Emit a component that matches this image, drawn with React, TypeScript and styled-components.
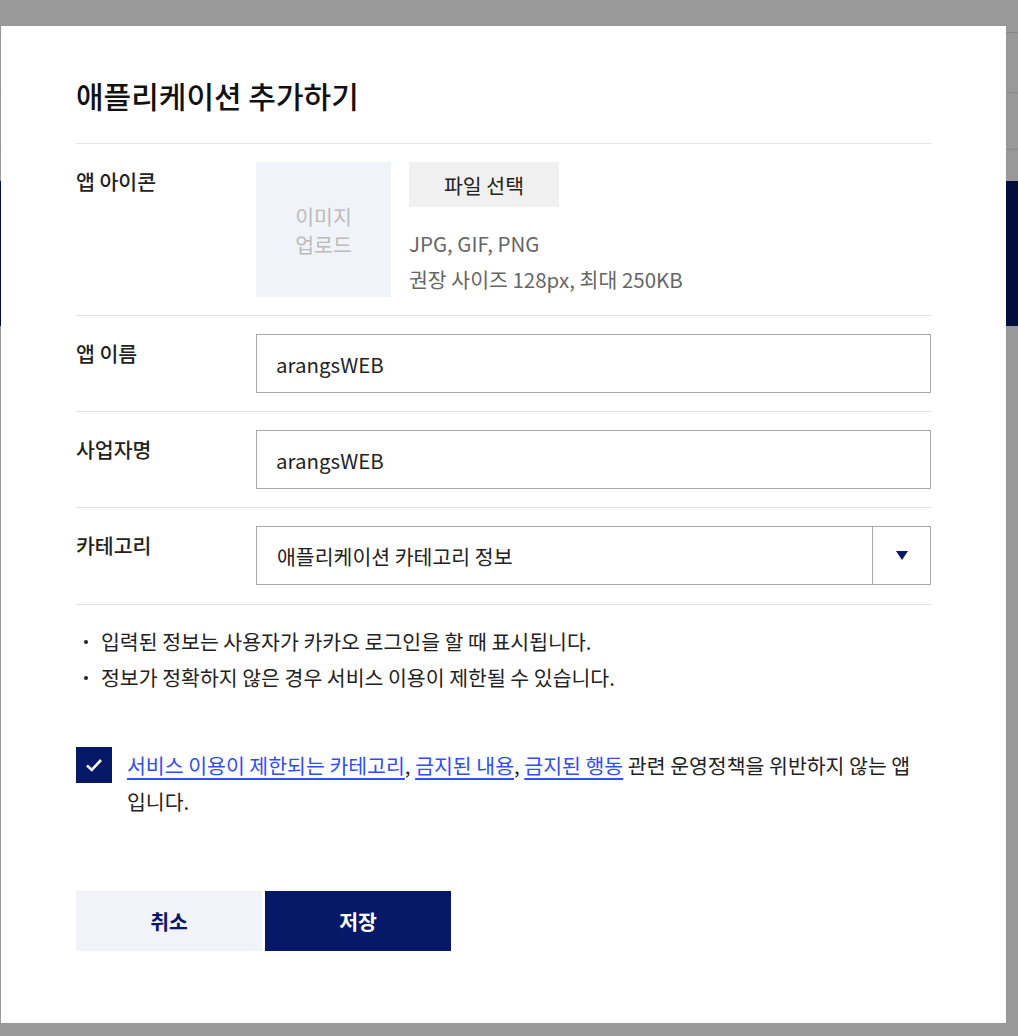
import React from "react";
import styled, { createGlobalStyle } from "styled-components";

const GlobalStyle = createGlobalStyle`
  html, body {
    margin: 0;
    padding: 0;
  }
  body {
    font-family: "Noto Sans CJK KR", "Noto Sans", sans-serif;
    color: #222;
  }
  * { box-sizing: border-box; }
`;

const FONT = `"Noto Sans CJK KR", "Noto Sans", sans-serif`;
const NAVY = "#061868";
const TEXT_SIZE = "20.5px";

/* ---------- underlying page (dimmed) ---------- */
const Page = styled.div`
  width: 1018px;
  height: 1036px;
  background: #fff;
  display: flex;
  flex-direction: column;
`;

const PageBar = styled.div<{ $h: number }>`
  height: ${(p) => p.$h}px;
  border-bottom: 1px solid #e2e2e2;
`;

const PageBanner = styled.div`
  margin-top: 31px;
  height: 145px;
  background: ${NAVY};
`;

/* ---------- overlay & modal ---------- */
const Overlay = styled.div`
  position: fixed;
  inset: 0;
  background: rgba(0, 0, 0, 0.4);
`;

const Modal = styled.div`
  position: absolute;
  left: 1px;
  top: 26px;
  width: 1005px;
  height: 997px;
  background: #fff;
  padding: 48px 75px 0 75px;
  font-family: ${FONT};
`;

const Title = styled.h1`
  margin: 0 0 27px;
  font-size: 30px;
  line-height: 42px;
  font-weight: 500;
  color: #111;
`;

const Form = styled.div`
  border-top: 1px solid #e5e5e5;
`;

const Row = styled.div`
  display: flex;
  padding: 18px 0;
  border-bottom: 1px solid #e5e5e5;
  &:last-child {
    padding-bottom: 19px;
  }
`;

const Label = styled.div`
  width: 180px;
  flex-shrink: 0;
  font-size: ${TEXT_SIZE};
  line-height: 38px;
  font-weight: 500;
  color: #222;
`;

const Field = styled.div`
  flex: 1;
  display: flex;
`;

const ImageBox = styled.div`
  width: 135px;
  height: 135px;
  background: #f2f3f8;
  color: #bbb;
  font-size: ${TEXT_SIZE};
  line-height: 28px;
  display: flex;
  align-items: center;
  justify-content: center;
  text-align: center;
`;

const UploadSide = styled.div`
  margin-left: 18px;
  display: flex;
  flex-direction: column;
  align-items: flex-start;
`;

const FileButton = styled.button`
  width: 150px;
  height: 45px;
  border: 0;
  background: #f0f0f0;
  font-family: ${FONT};
  font-size: ${TEXT_SIZE};
  color: #222;
  padding: 0;
  cursor: pointer;
`;

const Help = styled.div`
  margin-top: 18px;
  font-size: ${TEXT_SIZE};
  line-height: 36px;
  color: #666;
`;

const TextInput = styled.input`
  width: 100%;
  height: 59px;
  border: 1px solid #aaa;
  padding: 0 19px;
  font-family: ${FONT};
  font-size: ${TEXT_SIZE};
  color: #222;
  outline: none;
  background: #fff;
`;

const Select = styled.div`
  width: 100%;
  height: 59px;
  border: 1px solid #aaa;
  display: flex;
  align-items: stretch;
`;

const SelectValue = styled.div`
  flex: 1;
  padding: 0 20px;
  display: flex;
  align-items: center;
  font-size: ${TEXT_SIZE};
  color: #222;
`;

const SelectArrow = styled.div`
  width: 58px;
  border-left: 1px solid #aaa;
  display: flex;
  align-items: center;
  justify-content: center;
`;

const Notes = styled.ul`
  list-style: none;
  margin: 0;
  padding: 18px 0 0;
`;

const Note = styled.li`
  position: relative;
  padding-left: 25px;
  font-size: ${TEXT_SIZE};
  line-height: 36px;
  color: #222;
  &::before {
    content: "";
    position: absolute;
    left: 8px;
    top: 17px;
    width: 4px;
    height: 4px;
    border-radius: 50%;
    background: #222;
  }
`;

const Agree = styled.label`
  margin-top: 52px;
  display: flex;
  align-items: flex-start;
  gap: 15px;
`;

const CheckBox = styled.span`
  width: 36px;
  height: 36px;
  flex-shrink: 0;
  background: ${NAVY};
  display: flex;
  align-items: center;
  justify-content: center;
`;

const AgreeText = styled.div`
  font-size: ${TEXT_SIZE};
  line-height: 36px;
  color: #222;
`;

const PolicyLink = styled.a`
  color: #2f4ff0;
  text-decoration: underline;
  text-underline-offset: 4px;
`;

const Actions = styled.div`
  margin-top: 72px;
  display: flex;
  gap: 3px;
`;

const ActionButton = styled.button<{ $primary?: boolean }>`
  width: 186px;
  height: 60px;
  border: 0;
  padding: 0;
  font-family: ${FONT};
  font-size: ${TEXT_SIZE};
  font-weight: 700;
  background: ${(p) => (p.$primary ? NAVY : "#f2f3f8")};
  color: ${(p) => (p.$primary ? "#fff" : NAVY)};
  cursor: pointer;
`;

export default function App() {
  return (
    <>
      <GlobalStyle />
      <Page>
        <PageBar $h={33} />
        <PageBar $h={60} />
        <PageBar $h={57} />
        <PageBanner />
      </Page>
      <Overlay>
        <Modal>
          <Title>애플리케이션 추가하기</Title>
          <Form>
            <Row>
              <Label>앱 아이콘</Label>
              <Field>
                <ImageBox>
                  이미지
                  <br />
                  업로드
                </ImageBox>
                <UploadSide>
                  <FileButton type="button">파일 선택</FileButton>
                  <Help>
                    JPG, GIF, PNG
                    <br />
                    권장 사이즈 128px, 최대 250KB
                  </Help>
                </UploadSide>
              </Field>
            </Row>
            <Row>
              <Label>앱 이름</Label>
              <Field>
                <TextInput defaultValue="arangsWEB" />
              </Field>
            </Row>
            <Row>
              <Label>사업자명</Label>
              <Field>
                <TextInput defaultValue="arangsWEB" />
              </Field>
            </Row>
            <Row>
              <Label>카테고리</Label>
              <Field>
                <Select>
                  <SelectValue>애플리케이션 카테고리 정보</SelectValue>
                  <SelectArrow>
                    <svg width="12" height="9" viewBox="0 0 12 9">
                      <path d="M0 0 H12 L6 9 Z" fill={NAVY} />
                    </svg>
                  </SelectArrow>
                </Select>
              </Field>
            </Row>
          </Form>
          <Notes>
            <Note>입력된 정보는 사용자가 카카오 로그인을 할 때 표시됩니다.</Note>
            <Note>정보가 정확하지 않은 경우 서비스 이용이 제한될 수 있습니다.</Note>
          </Notes>
          <Agree>
            <CheckBox>
              <svg width="18" height="16" viewBox="0 0 18 16">
                <path d="M2 8.5 L6.8 13 L16 3" fill="none" stroke="#fff" strokeWidth="2.6" />
              </svg>
            </CheckBox>
            <AgreeText>
              <PolicyLink href="#">서비스 이용이 제한되는 카테고리</PolicyLink>,{" "}
              <PolicyLink href="#">금지된 내용</PolicyLink>,{" "}
              <PolicyLink href="#">금지된 행동</PolicyLink> 관련 운영정책을 위반하지 않는 앱
              입니다.
            </AgreeText>
          </Agree>
          <Actions>
            <ActionButton type="button">취소</ActionButton>
            <ActionButton type="button" $primary>
              저장
            </ActionButton>
          </Actions>
        </Modal>
      </Overlay>
    </>
  );
}
